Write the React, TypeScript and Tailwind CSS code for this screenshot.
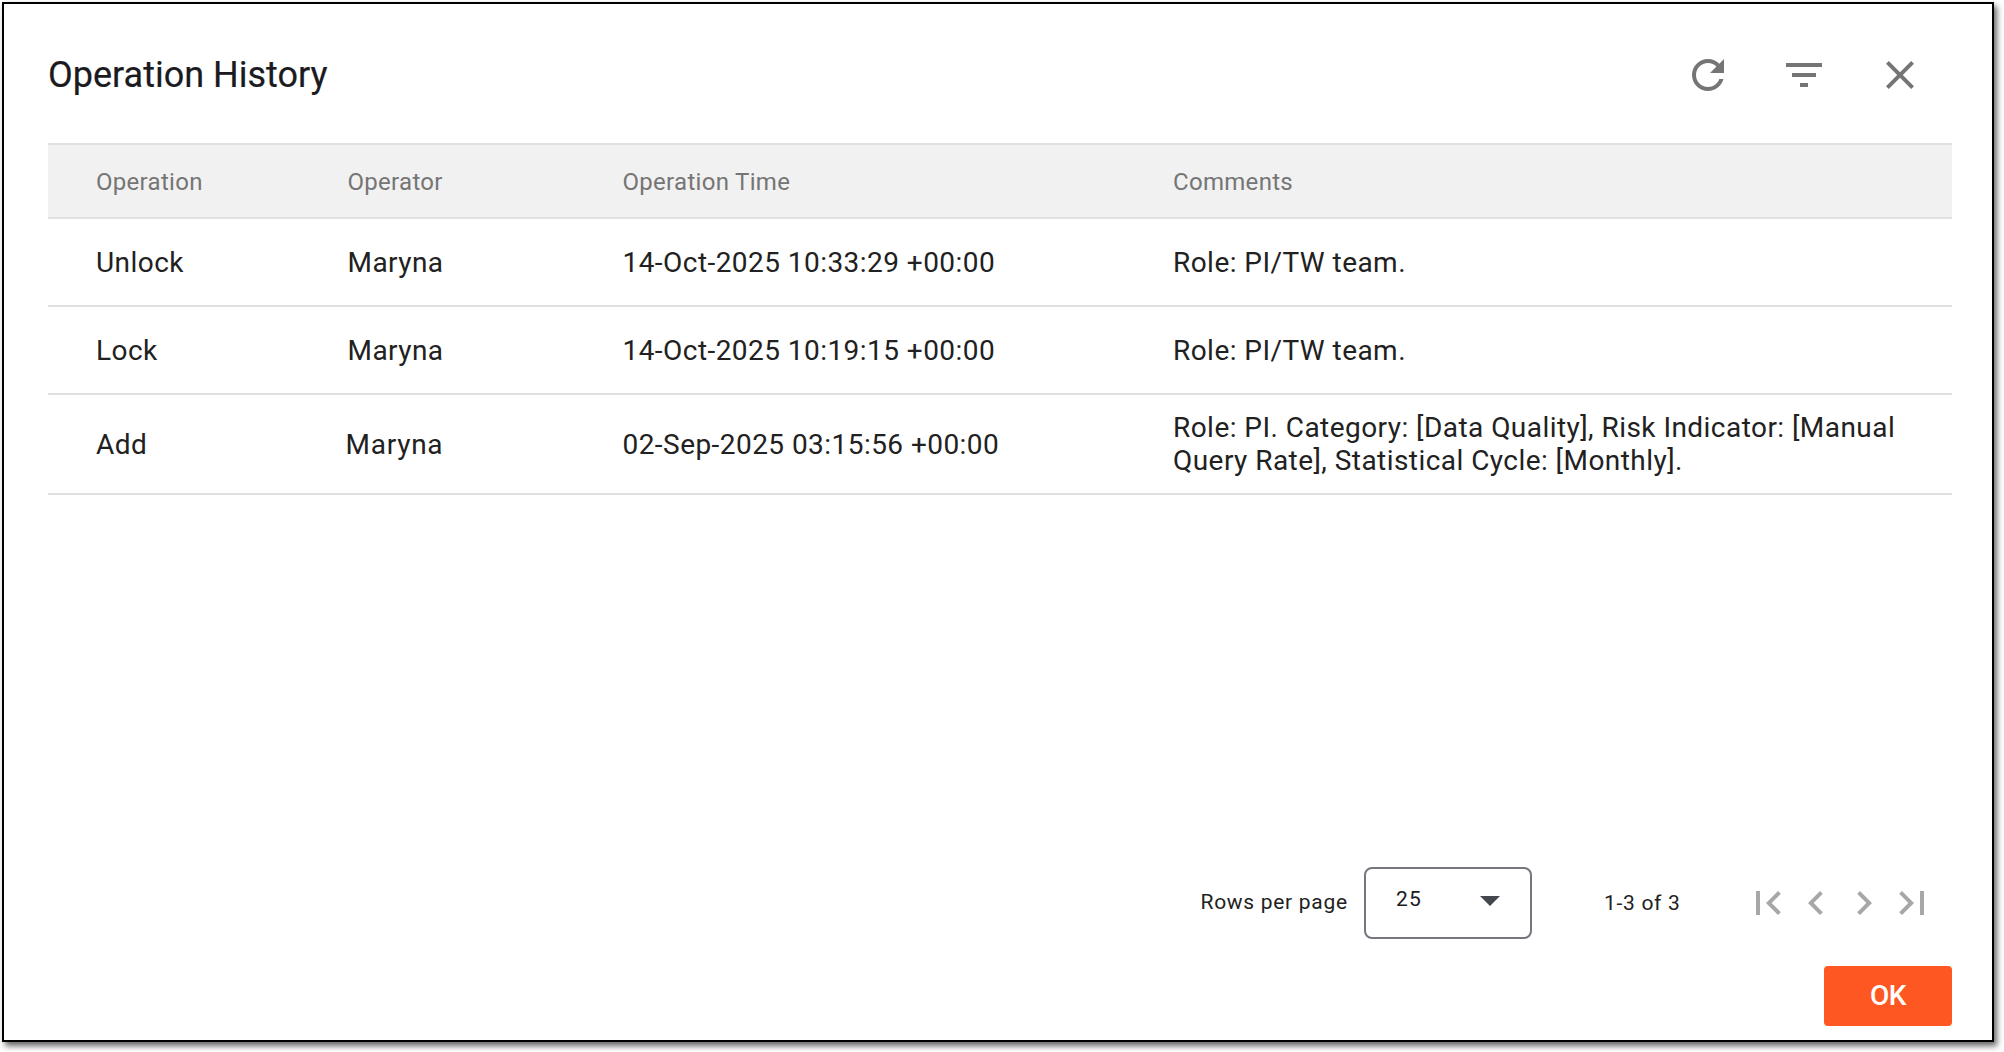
import type { ReactNode } from "react";

type Entry = { operation: string; operator: string; operatorClass?: string; time: string; comments: string; rowClass: string };

const entries: Entry[] = [
  { operation: "Unlock", operator: "Maryna", time: "14-Oct-2025 10:33:29 +00:00", comments: "Role: PI/TW team.", rowClass: "h-[88px]" },
  { operation: "Lock", operator: "Maryna", time: "14-Oct-2025 10:19:15 +00:00", comments: "Role: PI/TW team.", rowClass: "h-[88px]" },
  {
    operation: "Add",
    operator: "Maryna",
    operatorClass: "-ml-[2px] tracking-[0.75px]",
    time: "02-Sep-2025 03:15:56 +00:00",
    comments: "Role: PI. Category: [Data Quality], Risk Indicator: [Manual Query Rate], Statistical Cycle: [Monthly].",
    rowClass: "h-[100px]",
  },
];

const columns = "grid grid-cols-[251.5px_275px_550.5px_735px] items-center pl-12 border-b-2 border-[#e0e0e0]";

function Icon({ d, className }: { d: string; className: string }) {
  return (
    <svg viewBox="0 0 24 24" className={className} fill="currentColor">
      <path d={d} />
    </svg>
  );
}

function IconButton({ label, children, className }: { label: string; children: ReactNode; className?: string }) {
  return (
    <button type="button" aria-label={label} className={className}>
      {children}
    </button>
  );
}

const toolbar = [
  {
    label: "Refresh",
    d: "M17.65 6.35C16.2 4.9 14.21 4 12 4c-4.42 0-7.99 3.58-7.99 8s3.57 8 7.99 8c3.73 0 6.84-2.55 7.73-6h-2.08c-.82 2.33-3.04 4-5.65 4-3.31 0-6-2.69-6-6s2.69-6 6-6c1.66 0 3.14.69 4.22 1.78L13 11h7V4l-2.35 2.35z",
  },
  { label: "Filter", d: "M10 18h4v-2h-4v2zM3 6v2h18V6H3zm3 7h12v-2H6v2z" },
  {
    label: "Close",
    d: "M19 6.41L17.59 5 12 10.59 6.41 5 5 6.41 10.59 12 5 17.59 6.41 19 12 13.41 17.59 19 19 17.59 13.41 12z",
  },
];

const pager = [
  { label: "First page", d: "M18.41 16.59L13.82 12l4.59-4.59L17 6l-6 6 6 6zM6 6h2v12H6z" },
  { label: "Previous page", d: "M15.41 7.41L14 6l-6 6 6 6 1.41-1.41L10.83 12z" },
  { label: "Next page", d: "M10 6L8.59 7.41 13.17 12l-4.58 4.59L10 18l6-6z" },
  { label: "Last page", d: "M5.59 7.41L10.18 12l-4.59 4.59L7 18l6-6-6-6zM16 6h2v12h-2z" },
];

export default function App() {
  return (
    <div className="h-[1052px] w-[2004px] overflow-hidden bg-white p-[2px] font-['Roboto',sans-serif] text-[#212121]">
      <section className="flex h-[1040px] w-[1992px] flex-col border-2 border-black bg-white pr-10 pb-[14px] pl-11 shadow-[3px_4px_6px_rgba(0,0,0,0.6)]">
        <header className="flex h-[139px] shrink-0 items-center justify-between pt-[3px] pr-7">
          <h1 className="text-[36px] leading-[42px] text-[#1b1b1f] [-webkit-text-stroke:0.2px_#1b1b1f]">Operation History</h1>
          <div className="flex gap-12 text-[#757575]">
            {toolbar.map((t) => (
              <IconButton key={t.label} label={t.label}>
                <Icon d={t.d} className="size-12" />
              </IconButton>
            ))}
          </div>
        </header>

        <div className={`${columns} h-[76px] border-t-2 bg-[#f1f1f1] pt-0.5 text-2xl leading-7 tracking-[0.3px] text-[#757575]`}>
          <span>Operation</span>
          <span>Operator</span>
          <span>Operation Time</span>
          <span>Comments</span>
        </div>
        {entries.map((e) => (
          <div key={e.operation} className={`${columns} ${e.rowClass} text-[28px] leading-[33px] tracking-[0.45px]`}>
            <span>{e.operation}</span>
            <span className={e.operatorClass}>{e.operator}</span>
            <span>{e.time}</span>
            <span>{e.comments}</span>
          </div>
        ))}

        <footer className="mt-auto flex flex-col items-end">
          <div className="flex h-[72px] items-center pr-4 text-[21px] leading-6 tracking-[0.7px]">
            <span className="w-[163.5px] -translate-y-px">Rows per page</span>
            <button
              type="button"
              className="flex h-[72px] w-[168px] items-center justify-between rounded-lg border-2 border-[#74777f] pr-[30px] pb-2 pl-[30px] tracking-[1.2px] text-[#1b1b1f]"
            >
              <span>25</span>
              <svg viewBox="0 0 20 10" className="mt-1 h-[10px] w-5 text-[#44474e]" fill="currentColor">
                <path d="M0 0h20L10 10z" />
              </svg>
            </button>
            <span className="ml-[72px] w-[140px]">1-3 of 3</span>
            <div className="flex text-[#a7a7a9]">
              {pager.map((p) => (
                <IconButton key={p.label} label={p.label}>
                  <Icon d={p.d} className="size-12" />
                </IconButton>
              ))}
            </div>
          </div>
          <button type="button" className="mt-[27px] h-[60px] w-32 rounded bg-[#ff5722] pb-0.5 text-[28px] leading-[33px] font-medium tracking-[-0.4px] text-white">
            OK
          </button>
        </footer>
      </section>
    </div>
  );
}
